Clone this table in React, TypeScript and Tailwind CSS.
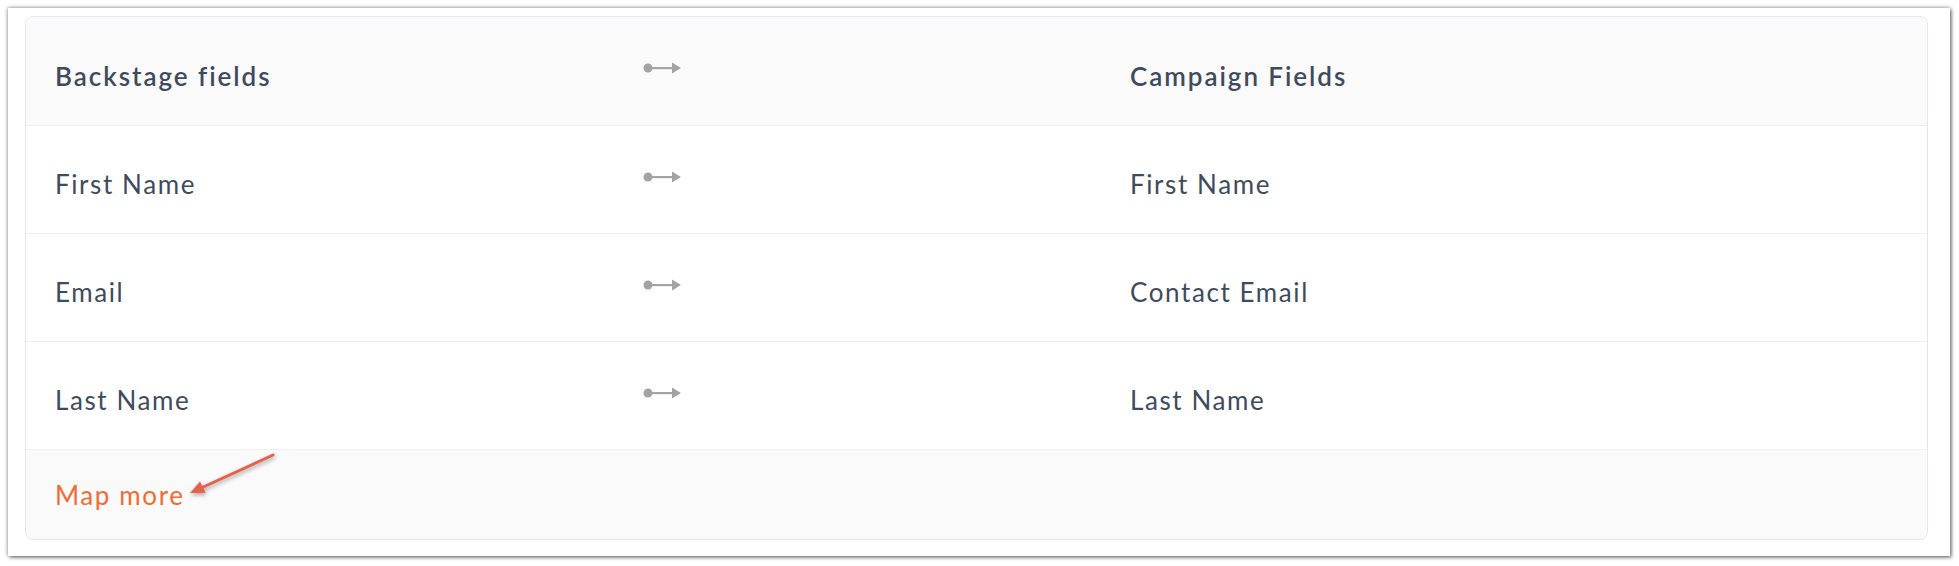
const rows = [
  { from: 'First Name', to: 'First Name' },
  { from: 'Email', to: 'Contact Email' },
  { from: 'Last Name', to: 'Last Name' },
]

function MapArrow() {
  return (
    <svg width="40" height="12" viewBox="0 0 40 12" className="mb-[16px] -ml-[1px]">
      <circle cx="5" cy="6" r="4.5" fill="#a3a3a3" />
      <rect x="6" y="5" width="26" height="2.2" fill="#a3a3a3" />
      <path d="M29 0.5 L38 6 L29 11.5 Z" fill="#a3a3a3" />
    </svg>
  )
}

function Row({ left, right, head }: { left: string; right: string; head?: boolean }) {
  return (
    <div
      className={`flex items-center pl-[29px] pt-[10px] ${
        head ? 'h-[108px] bg-[#fafafa] font-semibold tracking-[1.95px]' : 'h-[108px] border-t border-[#eef1f4] bg-white'
      }`}
    >
      <div className="w-[589px]">{left}</div>
      <div className="w-[486px] flex items-center">
        <MapArrow />
      </div>
      <div className="flex-1">{right}</div>
    </div>
  )
}

export default function App() {
  return (
    <div className="w-[1959px] h-[566px] bg-white pt-[8px] pl-[8px]">
      <div className="relative w-[1942px] h-[548px] bg-white pl-[17px] pt-[8px] shadow-[0_0_4px_rgba(0,0,0,0.55),2px_2px_3px_rgba(0,0,0,0.3)]">
        <div className="w-[1903px] h-[524px] rounded-[8px] border border-[#e4e8ee] overflow-hidden bg-[#fafafa] text-[26px] text-[#3f4b5d] font-['Lato',sans-serif] tracking-[1.6px]">
          <Row left="Backstage fields" right="Campaign Fields" head />
          {rows.map((r) => (
            <Row key={r.from} left={r.from} right={r.to} />
          ))}
          <div className="h-[91px] border-t border-[#eef1f4] flex items-center pl-[29px]">
            <span className="text-[#f06c33]">Map more</span>
          </div>
        </div>

        {/* annotation arrow */}
        <svg
          className="absolute left-0 top-0 pointer-events-none drop-shadow-[1px_2px_2px_rgba(0,0,0,0.35)]"
          width="1942"
          height="548"
        >
          <line x1="265" y1="447" x2="193" y2="480" stroke="#e8604c" strokeWidth="3" strokeLinecap="round" />
          <path d="M182 485 L197.5 484.8 L192 473.5 Z" fill="#e8604c" />
        </svg>
      </div>
    </div>
  )
}
